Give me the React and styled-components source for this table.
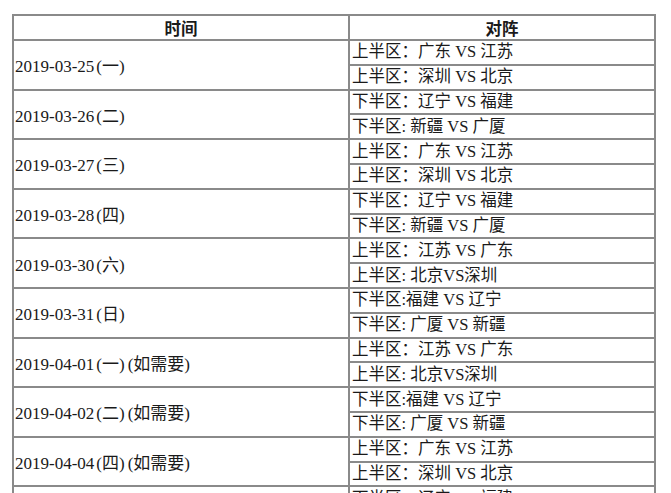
import React from 'react';
import styled, { createGlobalStyle } from 'styled-components';

const GlobalStyle = createGlobalStyle`
    body {
        margin: 0;
        background: #fff;
        font-family: "Liberation Serif", "Noto Sans CJK SC", serif;
        color: #1a1a1a;
    }
`;

const Page = styled.div`
    padding: 14px 0 0 12px;
`;

const Table = styled.table`
    width: 644px;
    border-collapse: separate;
    border-spacing: 0;
    border: 1px solid #8a8a8a;
    table-layout: fixed;
`;

const HeadCell = styled.th`
    width: ${props => props.width}px;
    height: 23px;
    padding: 0;
    border: 1px solid #8a8a8a;
    font-family: "Noto Sans CJK SC", sans-serif;
    font-size: 16.5px;
    font-weight: 700;
    line-height: 22px;
    text-align: center;
`;

const DateCell = styled.td`
    padding: 0 0 0 1px;
    border: 1px solid #8a8a8a;
    font-size: 17px;
    vertical-align: middle;
    white-space: nowrap;
`;

const Paren = styled.span`
    margin: 0 1px 0 2px;
`;

const MatchCell = styled.td`
    height: 22.8px;
    padding: 0 0 0 2px;
    border: 1px solid #8a8a8a;
    font-size: 16.5px;
    line-height: 22px;
    white-space: nowrap;
`;

const schedule = [
    { date: '2019-03-25', day: '(一)', games: ['上半区：广东 VS 江苏', '上半区：深圳 VS 北京'] },
    { date: '2019-03-26', day: '(二)', games: ['下半区：辽宁 VS 福建', '下半区: 新疆 VS 广厦'] },
    { date: '2019-03-27', day: '(三)', games: ['上半区：广东 VS 江苏', '上半区：深圳 VS 北京'] },
    { date: '2019-03-28', day: '(四)', games: ['下半区：辽宁 VS 福建', '下半区: 新疆 VS 广厦'] },
    { date: '2019-03-30', day: '(六)', games: ['上半区：江苏 VS 广东', '上半区: 北京VS深圳'] },
    { date: '2019-03-31', day: '(日)', games: ['下半区:福建 VS 辽宁', '下半区: 广厦 VS 新疆'] },
    { date: '2019-04-01', day: '(一)', note: '(如需要)', games: ['上半区：江苏 VS 广东', '上半区: 北京VS深圳'] },
    { date: '2019-04-02', day: '(二)', note: '(如需要)', games: ['下半区:福建 VS 辽宁', '下半区: 广厦 VS 新疆'] },
    { date: '2019-04-04', day: '(四)', note: '(如需要)', games: ['上半区：广东 VS 江苏', '上半区：深圳 VS 北京'] },
    { date: '2019-04-06', day: '(六)', note: '(如需要)', games: ['下半区：辽宁 VS 福建', '下半区: 新疆 VS 广厦'] }
];

export default function App() {
    return (
        <Page>
            <GlobalStyle />
            <Table>
                <thead>
                    <tr>
                        <HeadCell width={334}>时间</HeadCell>
                        <HeadCell width={304}>对阵</HeadCell>
                    </tr>
                </thead>
                <tbody>
                    {schedule.map(item => (
                        <React.Fragment key={item.date}>
                            <tr>
                                <DateCell rowSpan={2}>
                                    {item.date}<Paren>{item.day}</Paren>{item.note && <Paren>{item.note}</Paren>}
                                </DateCell>
                                <MatchCell>{item.games[0]}</MatchCell>
                            </tr>
                            <tr>
                                <MatchCell>{item.games[1]}</MatchCell>
                            </tr>
                        </React.Fragment>
                    ))}
                </tbody>
            </Table>
        </Page>
    );
}
